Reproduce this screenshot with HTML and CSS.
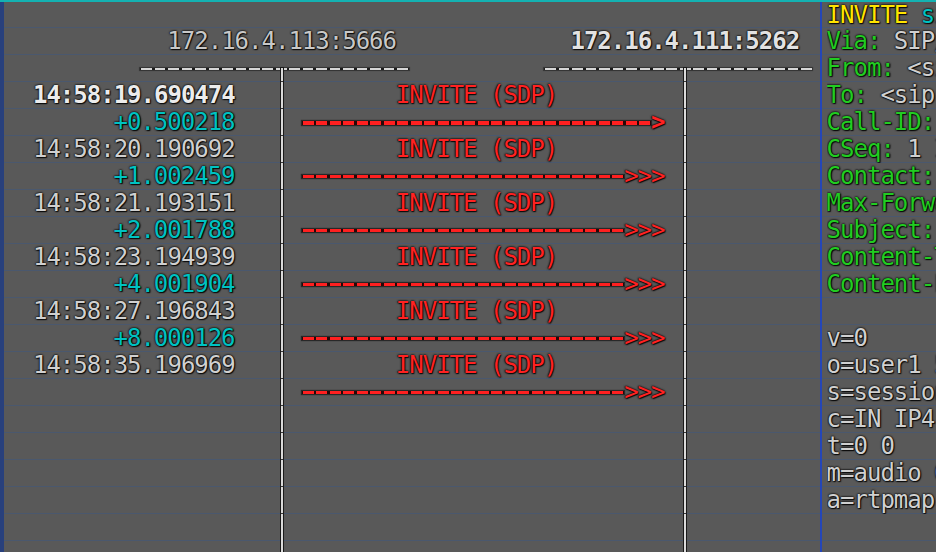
FILE: index.html
```html
<!DOCTYPE html>
<html>
<head>
<meta charset="utf-8">
<link rel="stylesheet" href="styles.css">
</head>
<body>
<div class="screen">
  <div class="edge"></div>
  <div class="diagram">
    <div class="row hosts">
      <span class="host h1">172.16.4.113:5666</span>
      <span class="host h2">172.16.4.111:5262</span>
    </div>
    <div class="row rule">
      <span class="hl r1"></span>
      <span class="hl r2"></span>
    </div>

    <div class="msg">
      <span class="time sel">14:58:19.690474</span>
      <span class="label">INVITE (SDP)</span>
      <span class="delta">+0.500218</span>
      <span class="arrow sel"><span class="shaft"></span><span class="head">&gt;</span></span>
    </div>
    <div class="msg">
      <span class="time">14:58:20.190692</span>
      <span class="label">INVITE (SDP)</span>
      <span class="delta">+1.002459</span>
      <span class="arrow"><span class="shaft"></span><span class="head">&gt;&gt;&gt;</span></span>
    </div>
    <div class="msg">
      <span class="time">14:58:21.193151</span>
      <span class="label">INVITE (SDP)</span>
      <span class="delta">+2.001788</span>
      <span class="arrow"><span class="shaft"></span><span class="head">&gt;&gt;&gt;</span></span>
    </div>
    <div class="msg">
      <span class="time">14:58:23.194939</span>
      <span class="label">INVITE (SDP)</span>
      <span class="delta">+4.001904</span>
      <span class="arrow"><span class="shaft"></span><span class="head">&gt;&gt;&gt;</span></span>
    </div>
    <div class="msg">
      <span class="time">14:58:27.196843</span>
      <span class="label">INVITE (SDP)</span>
      <span class="delta">+8.000126</span>
      <span class="arrow"><span class="shaft"></span><span class="head">&gt;&gt;&gt;</span></span>
    </div>
    <div class="msg">
      <span class="time">14:58:35.196969</span>
      <span class="label">INVITE (SDP)</span>
      <span class="delta"></span>
      <span class="arrow"><span class="shaft"></span><span class="head">&gt;&gt;&gt;</span></span>
    </div>

    <div class="life l1"></div>
    <div class="life l2"></div>
  </div>

  <div class="panel">
    <div class="ln"><span class="y">INVITE</span> <span class="c">sip:user2@172.16.4.111:5262 SIP/2.0</span></div>
    <div class="ln"><span class="g">Via:</span> SIP/2.0/UDP 172.16.4.113:5666;branch=z9hG4bK-1</div>
    <div class="ln"><span class="g">From:</span> &lt;sip:user1@172.16.4.113:5666&gt;;tag=1</div>
    <div class="ln"><span class="g">To:</span> &lt;sip:user2@172.16.4.111:5262&gt;</div>
    <div class="ln"><span class="g">Call-ID:</span> 1-12345@172.16.4.113</div>
    <div class="ln"><span class="g">CSeq:</span> 1 INVITE</div>
    <div class="ln"><span class="g">Contact:</span> sip:user1@172.16.4.113:5666</div>
    <div class="ln"><span class="g">Max-Forwards:</span> 70</div>
    <div class="ln"><span class="g">Subject:</span> Performance Test</div>
    <div class="ln"><span class="g">Content-Type:</span> application/sdp</div>
    <div class="ln"><span class="g">Content-Length:</span> 129</div>
    <div class="ln"></div>
    <div class="ln">v=0</div>
    <div class="ln">o=user1 53655765 2353687637 IN IP4 172.16.4.113</div>
    <div class="ln">s=session</div>
    <div class="ln">c=IN IP4 172.16.4.113</div>
    <div class="ln">t=0 0</div>
    <div class="ln">m=audio 6000 RTP/AVP 0</div>
    <div class="ln">a=rtpmap:0 PCMU/8000</div>
  </div>
</div>
</body>
</html>
```
FILE: styles.css
```css
html, body {
  margin: 0;
  padding: 0;
  width: 936px;
  height: 552px;
  overflow: hidden;
  background: #595959;
}

.screen {
  display: flex;
  width: 936px;
  height: 550px;
  border-top: 2px solid #14b2b2;
  overflow: hidden;
  background-color: #595959;
  background-image: repeating-linear-gradient(to bottom, transparent 0 26px, #4a586e 26px 27px);
  background-position: 0 -1px;
  font-family: "DejaVu Sans Mono", monospace;
  font-size: 24px;
  letter-spacing: -1px;
  line-height: 27px;
  color: #d0d0d0;
  text-shadow: 0 0 2px #000, 0 0 2px #000, 1px 1px 1px rgba(0, 0, 0, 0.8);
}

.edge {
  flex: 0 0 4px;
  margin-right: 2.1px;
  background: #28407c;
}

.diagram {
  position: relative;
  flex: 0 0 807px;
  display: flex;
  flex-direction: column;
  padding-top: 26px;
}

.row, .msg {
  display: grid;
  grid-template-columns: repeat(60, 13.45px);
  grid-auto-rows: 27px;
  white-space: pre;
}

.host.h1 { grid-column: 13 / span 17; color: #c8c8c8; }
.host.h2 { grid-column: 43 / span 17; color: #e2e2e2; font-weight: bold; }

.hl {
  align-self: center;
  height: 2px;
  background: repeating-linear-gradient(90deg, #1c1c1c 0 1.4px, #d6d6d6 1.4px 12px, #1c1c1c 12px 13.45px);
  box-shadow: 0 0 1px 1px rgba(0, 0, 0, 0.45);
}
.hl.r1 { grid-column: 11 / span 20; }
.hl.r2 { grid-column: 41 / span 20; }

.msg { grid-template-rows: 27px 27px; }

.time { grid-row: 1; grid-column: 3 / span 15; }
.time.sel { color: #ececec; font-weight: bold; }

.label { grid-row: 1; grid-column: 30 / span 12; color: #ff2222; }

.delta {
  grid-row: 2;
  grid-column: 3 / span 15;
  text-align: right;
  color: #00c2c2;
}

.arrow {
  grid-row: 2;
  grid-column: 23 / span 27;
  display: flex;
  align-items: center;
  color: #ff2222;
}
.arrow .shaft {
  flex: 1;
  height: 3px;
  background: repeating-linear-gradient(90deg, #2a0606 0 1px, #ff2020 1px 12px, #2a0606 12px 13.45px);
  box-shadow: 0 0 1px 1px rgba(0, 0, 0, 0.55);
}
.arrow.sel .shaft { height: 4px; }
.arrow.sel .head { font-weight: bold; }

.life {
  position: absolute;
  top: 66px;
  bottom: 0;
  width: 2px;
  background: repeating-linear-gradient(to bottom, #dadada 0 26px, #3a3a3a 26px 27px);
  background-position: 0 -13px;
  box-shadow: 0 0 0 1px #1a1a1a;
}
.life.l1 { left: 274.7px; }
.life.l2 { left: 678.2px; }

.panel {
  flex: 1;
  min-width: 0;
  margin-left: 7px;
  padding-left: 4.5px;
  border-left: 2px solid #2446b8;
  overflow: hidden;
}
.panel .ln { height: 27px; white-space: pre; overflow: hidden; }
.panel .ln:first-child { height: 26px; line-height: 26px; }

.y { color: #ffe400; }
.c { color: #00c2c2; }
.g { color: #22cc22; }
```
